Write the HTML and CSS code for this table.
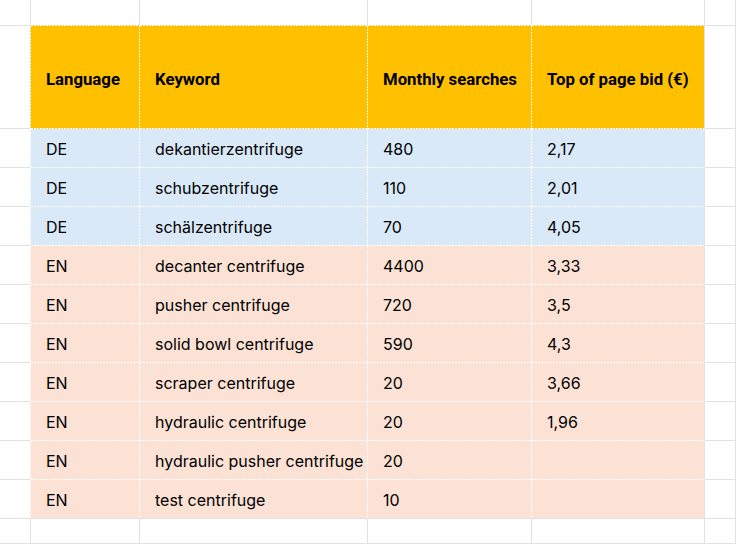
FILE: index.html
```html
<!DOCTYPE html>
<html lang="en">
<head>
<meta charset="utf-8">
<title>Keywords</title>
<link rel="stylesheet" href="styles.css">
</head>
<body>
<div class="sheet">
  <div class="row top">
    <div class="cell"></div>
    <div class="cell edge-t"></div><div class="cell edge-t"></div><div class="cell edge-t"></div><div class="cell edge-t"></div>
    <div class="cell"></div><div class="cell"></div>
  </div>
  <div class="row head">
    <div class="cell edge-l"></div>
    <div class="cell t">Language</div><div class="cell t">Keyword</div><div class="cell t">Monthly searches</div><div class="cell t last">Top of page bid (€)</div>
    <div class="cell"></div><div class="cell"></div>
  </div>
  <div class="row de">
    <div class="cell edge-l"></div>
    <div class="cell t">DE</div><div class="cell t">dekantierzentrifuge</div><div class="cell t">480</div><div class="cell t last">2,17</div>
    <div class="cell"></div><div class="cell"></div>
  </div>
  <div class="row de">
    <div class="cell edge-l"></div>
    <div class="cell t">DE</div><div class="cell t">schubzentrifuge</div><div class="cell t">110</div><div class="cell t last">2,01</div>
    <div class="cell"></div><div class="cell"></div>
  </div>
  <div class="row de">
    <div class="cell edge-l"></div>
    <div class="cell t">DE</div><div class="cell t">schälzentrifuge</div><div class="cell t">70</div><div class="cell t last">4,05</div>
    <div class="cell"></div><div class="cell"></div>
  </div>
  <div class="row en">
    <div class="cell edge-l"></div>
    <div class="cell t">EN</div><div class="cell t">decanter centrifuge</div><div class="cell t">4400</div><div class="cell t last">3,33</div>
    <div class="cell"></div><div class="cell"></div>
  </div>
  <div class="row en">
    <div class="cell edge-l"></div>
    <div class="cell t">EN</div><div class="cell t">pusher centrifuge</div><div class="cell t">720</div><div class="cell t last">3,5</div>
    <div class="cell"></div><div class="cell"></div>
  </div>
  <div class="row en">
    <div class="cell edge-l"></div>
    <div class="cell t">EN</div><div class="cell t">solid bowl centrifuge</div><div class="cell t">590</div><div class="cell t last">4,3</div>
    <div class="cell"></div><div class="cell"></div>
  </div>
  <div class="row en">
    <div class="cell edge-l"></div>
    <div class="cell t">EN</div><div class="cell t">scraper centrifuge</div><div class="cell t">20</div><div class="cell t last">3,66</div>
    <div class="cell"></div><div class="cell"></div>
  </div>
  <div class="row en">
    <div class="cell edge-l"></div>
    <div class="cell t">EN</div><div class="cell t">hydraulic centrifuge</div><div class="cell t">20</div><div class="cell t last">1,96</div>
    <div class="cell"></div><div class="cell"></div>
  </div>
  <div class="row en">
    <div class="cell edge-l"></div>
    <div class="cell t">EN</div><div class="cell t">hydraulic pusher centrifuge</div><div class="cell t">20</div><div class="cell t last"></div>
    <div class="cell"></div><div class="cell"></div>
  </div>
  <div class="row en final">
    <div class="cell edge-l"></div>
    <div class="cell t">EN</div><div class="cell t">test centrifuge</div><div class="cell t">10</div><div class="cell t last"></div>
    <div class="cell"></div><div class="cell"></div>
  </div>
  <div class="row bottom">
    <div class="cell"></div><div class="cell"></div><div class="cell"></div><div class="cell"></div><div class="cell"></div><div class="cell"></div><div class="cell"></div>
  </div>
</div>
</body>
</html>
```
FILE: styles.css
```css
:root {
  --grid: #e1e1e1;
  --gold: #ffc000;
  --blue: #dae9f8;
  --peach: #fbe2d5;
  --vdash: repeating-linear-gradient(to bottom, #ffffff 0 2px, transparent 2px 3px);
  --hdash: repeating-linear-gradient(to right, #ffffff 0 2px, transparent 2px 3px);
}

html, body {
  margin: 0;
  padding: 0;
  background: #ffffff;
  overflow: hidden;
}

.sheet {
  display: grid;
  grid-template-columns: 31px 109px 228px 164px 173px 31px 1fr;
  grid-template-rows: 26px 103px repeat(10, 39px) 1fr;
  width: 736px;
  height: 544px;
  font-family: Inter, "Noto Sans", sans-serif;
  font-size: 16px;
  color: #000000;
}

.row {
  display: contents;
}

.head { --fill: var(--gold); }
.de { --fill: var(--blue); }
.en { --fill: var(--peach); }
.top { --fill: var(--gold); }

.cell {
  box-sizing: border-box;
  border-right: 1px solid var(--grid);
  border-bottom: 1px solid var(--grid);
  display: flex;
  align-items: center;
  padding: 2px 0 0 15px;
  white-space: nowrap;
  overflow: visible;
  min-width: 0;
}

.t {
  border-right-color: transparent;
  border-bottom-color: transparent;
  background-color: var(--fill);
  background-origin: border-box;
  background-repeat: no-repeat;
  background-image: var(--vdash), var(--hdash);
  background-position: right top, left bottom;
  background-size: 1px 100%, 100% 1px;
}

.t.last {
  border-right-color: var(--grid);
  background-image: none, var(--hdash);
}

.final .t {
  border-bottom-color: var(--grid);
  background-image: var(--vdash), none;
}

.final .t.last {
  background-image: none, none;
}

.edge-l {
  border-right-color: transparent;
  background-color: #ffffff;
  background-origin: border-box;
  background-repeat: no-repeat;
  background-image: var(--vdash), linear-gradient(var(--fill), var(--fill));
  background-position: right top, right top;
  background-size: 1px 100%, 1px 100%;
}

.edge-t {
  border-bottom-color: transparent;
  background-color: #ffffff;
  background-origin: border-box;
  background-repeat: no-repeat;
  background-image: var(--hdash), linear-gradient(var(--fill), var(--fill));
  background-position: left bottom, left bottom;
  background-size: 100% 1px, 100% 1px;
}

.head .t {
  font-family: Roboto, "Liberation Sans", sans-serif;
  font-weight: 700;
  font-size: 16.75px;
  padding-top: 3px;
}
```
